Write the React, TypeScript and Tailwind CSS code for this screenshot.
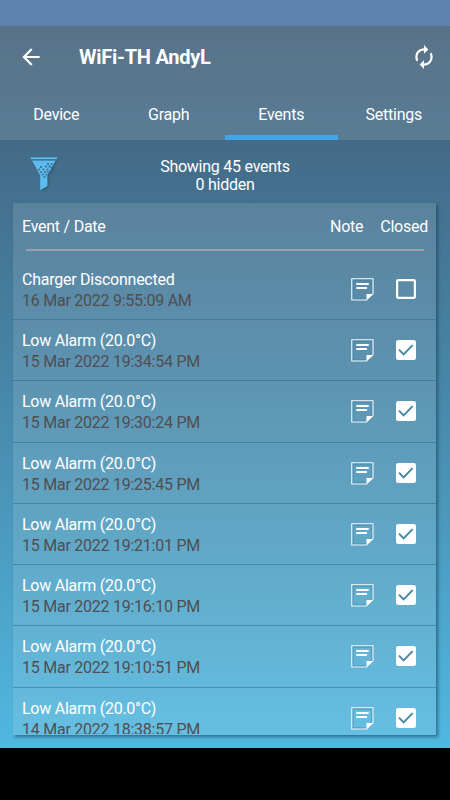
import { useState } from "react"

const tabs = ["Device", "Graph", "Events", "Settings"]

const initialEvents = [
  { name: "Charger Disconnected", date: "16 Mar 2022 9:55:09 AM", closed: false },
  { name: "Low Alarm (20.0°C)", date: "15 Mar 2022 19:34:54 PM", closed: true },
  { name: "Low Alarm (20.0°C)", date: "15 Mar 2022 19:30:24 PM", closed: true },
  { name: "Low Alarm (20.0°C)", date: "15 Mar 2022 19:25:45 PM", closed: true },
  { name: "Low Alarm (20.0°C)", date: "15 Mar 2022 19:21:01 PM", closed: true },
  { name: "Low Alarm (20.0°C)", date: "15 Mar 2022 19:16:10 PM", closed: true },
  { name: "Low Alarm (20.0°C)", date: "15 Mar 2022 19:10:51 PM", closed: true },
  { name: "Low Alarm (20.0°C)", date: "14 Mar 2022 18:38:57 PM", closed: true },
]

// holes in the funnel, as [x, y]
const holes = [
  [18, 7], [21.5, 7], [16, 9.5], [19.5, 9.5], [11, 10], [21.5, 10.5], [9, 12.5], [13.5, 12.5], [17.5, 12.5],
  [11, 15], [15, 15], [18, 15], [12.8, 17.5], [16.3, 17.5], [14.5, 20],
]

function FunnelIcon() {
  return (
    <svg width="28" height="35" viewBox="0 0 28 35" className="drop-shadow-[1px_1px_1px_rgba(30,60,80,0.5)]">
      <path d="M0.7 0.3h26.3v2H0.7z" fill="#5cbcf0" />
      <path d="M2 3.6h23.7L17.4 18.5V29L10.2 33.2V18.5z" fill="#5cbcf0" />
      {holes.map(([x, y]) => (
        <circle key={`${x}-${y}`} cx={x} cy={y} r="1.1" fill="#3f6f90" />
      ))}
    </svg>
  )
}

function NoteIcon() {
  return (
    <svg width="23" height="23" viewBox="0 0 23 23" fill="none">
      <path d="M21.5 15.5V1.5h-20v20h14.3" stroke="#2f7ea3" strokeOpacity="0.6" strokeWidth="2" />
      <path d="M22 16V0.8H0.8V22H16" stroke="white" strokeWidth="1.1" />
      <path d="M15.5 22.5V16h7z" fill="white" />
      <path d="M5.3 6h12.4M5.3 10h10.7" stroke="white" strokeWidth="1.9" />
    </svg>
  )
}

function Checkbox({ checked, onChange }: { checked: boolean; onChange: () => void }) {
  return (
    <button onClick={onChange} role="checkbox" aria-checked={checked} aria-label="Closed" className="h-5 w-5">
      <svg width="20" height="20" viewBox="0 0 20 20" fill="none">
        {checked ? (
          <>
            <rect width="20" height="20" rx="2.2" fill="white" />
            <path d="M3 9.7l4.6 4.6 9-9.1" stroke="#4485a8" strokeWidth="1.9" />
          </>
        ) : (
          <rect x="1.1" y="1.1" width="17.8" height="17.8" rx="1.2" stroke="white" strokeWidth="2.2" />
        )}
      </svg>
    </button>
  )
}

export default function App() {
  const [activeTab, setActiveTab] = useState("Events")
  const [events, setEvents] = useState(initialEvents)

  const toggleClosed = (index: number) => {
    setEvents((prev) => prev.map((event, i) => (i === index ? { ...event, closed: !event.closed } : event)))
  }

  return (
    <div className="flex h-[800px] w-[450px] flex-col overflow-hidden bg-black font-[Roboto,sans-serif] text-base tracking-[-0.25px] text-white">
      <div className="h-[26px] shrink-0 bg-[#5d83b0]" />

      <div className="flex h-[722px] shrink-0 flex-col bg-linear-to-b from-[#415f78] via-[#4681a2] via-[44%] to-[#50b8e0]">
        <header className="flex h-[114px] shrink-0 flex-col bg-white/12">
          <div className="flex h-[62px] items-center pr-[13px] pl-[18px]">
            <button aria-label="Back">
              <svg width="26" height="26" viewBox="0 0 24 24" fill="white">
                <path d="M20 11H7.83l5.59-5.59L12 4l-8 8 8 8 1.41-1.41L7.83 13H20v-2z" />
              </svg>
            </button>
            <h1 className="ml-[35px] flex-1 text-xl leading-6 font-bold">WiFi-TH AndyL</h1>
            <button aria-label="Refresh">
              <svg width="26" height="26" viewBox="0 0 24 24" fill="white">
                <path d="M12 6v3l4-4-4-4v3c-4.42 0-8 3.58-8 8 0 1.57.46 3.03 1.24 4.26L6.7 14.8c-.45-.83-.7-1.79-.7-2.8 0-3.31 2.69-6 6-6zm6.76 1.74L17.3 9.2c.44.84.7 1.79.7 2.8 0 3.31-2.69 6-6 6v-3l-4 4 4 4v-3c4.42 0 8-3.58 8-8 0-1.57-.46-3.03-1.24-4.26z" />
              </svg>
            </button>
          </div>
          <nav className="grid flex-1 grid-cols-4">
            {tabs.map((tab) => (
              <button
                key={tab}
                onClick={() => setActiveTab(tab)}
                className={`border-b-[5px] pt-[7px] ${activeTab === tab ? "border-[#42a5ea]" : "border-transparent"}`}
              >
                {tab}
              </button>
            ))}
          </nav>
        </header>

        <div className="grid h-[63px] shrink-0 grid-cols-[1fr_auto_1fr] pt-[17px]">
          <div className="pl-[30px]">
            <FunnelIcon />
          </div>
          <div className="pt-px text-center leading-[18px]">
            <p>Showing 45 events</p>
            <p>0 hidden</p>
          </div>
        </div>

        <div className="mr-[14px] ml-[13px] flex h-[532px] shrink-0 flex-col overflow-hidden bg-white/12 pb-px shadow-[2px_2px_3px_rgba(25,65,90,0.6)]">
          <div className="flex h-[46px] shrink-0 items-center pt-px pr-2 pl-[9px]">
            <span className="flex-1">Event / Date</span>
            <span className="mr-[17px]">Note</span>
            <span>Closed</span>
          </div>
          <div className="mr-3 ml-[13px] h-[1.5px] shrink-0 bg-[#9c9fa9]" />
          <div className="mt-[8.4px] flex-1 overflow-hidden">
            {events.map((event, index) => (
              <div
                key={event.date}
                className="flex h-[61.25px] border-b border-[#2c6585]/50 pr-[20px] pl-[9px]"
              >
                <div className="flex-1 pt-[10px] leading-[21px]">
                  <p>{event.name}</p>
                  <p className="text-[#504e51]">{event.date}</p>
                </div>
                <div className="mt-[19px] mr-[22px]">
                  <NoteIcon />
                </div>
                <div className="mt-5">
                  <Checkbox checked={event.closed} onChange={() => toggleClosed(index)} />
                </div>
              </div>
            ))}
          </div>
        </div>
      </div>
    </div>
  )
}
